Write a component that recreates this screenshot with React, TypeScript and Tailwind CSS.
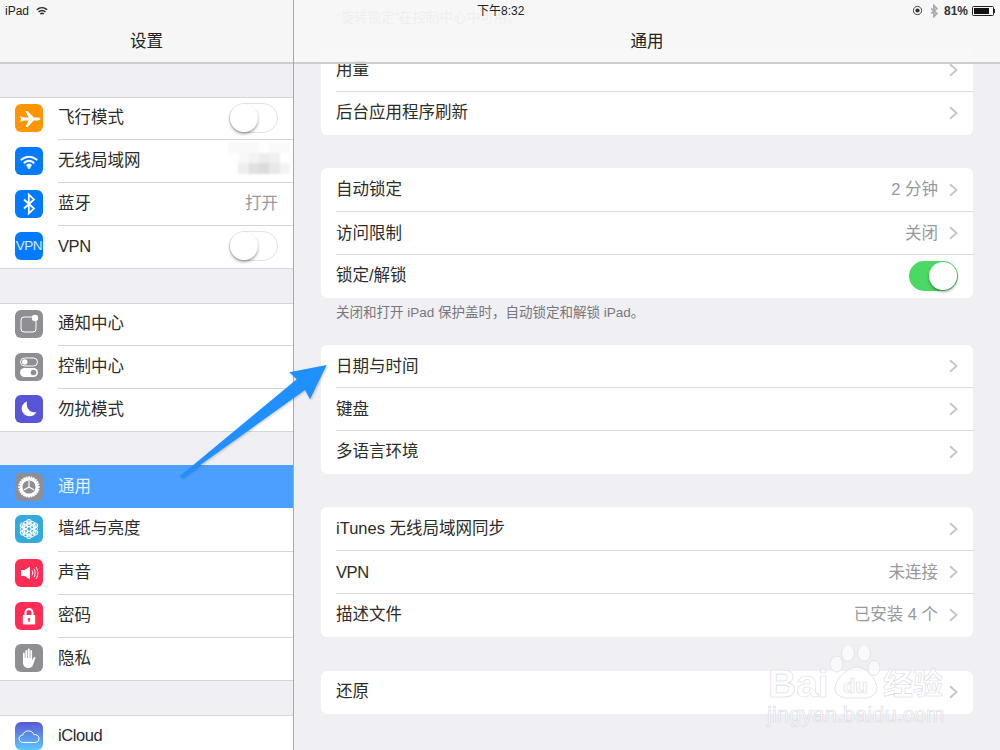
import React from "react";

const FONT = { fontFamily: '"Liberation Sans","Noto Sans CJK SC",sans-serif' };

function Plane() {
  return (
    <svg viewBox="0 0 28 28" className="w-[28px] h-[28px]">
      <path fill="#fff" d="M5 12.6l2 .1 2.4 0.7 4.2.1L10.400 7h2.200l6.300 6.500 4.100.1c1.300 0 2.400.6 2.400 1.400s-1.100 1.400-2.400 1.400l-4.100.1L12.600 23h-2.200l3.200-6.500-4.200.1-2.400.7-2 .1 1.100-2.400z" />
    </svg>
  );
}
function Wifi() {
  return (
    <svg viewBox="0 0 28 28" className="w-[28px] h-[28px]" fill="none" stroke="#fff" strokeWidth="2.200" strokeLinecap="round">
      <path d="M6.500 12.500c4.500-3.700 10.500-3.700 15 0" />
      <path d="M9.500 15.600c2.800-2.100 6.200-2.100 9 0" />
      <path d="M12.300 18.300c1-.7 2.400-.7 3.400 0" />
      <circle cx="14" cy="20.300" r=".6" fill="#fff" />
    </svg>
  );
}
function Bt({ color = "#fff", width = 1.8 }: { color?: string; width?: number }) {
  return (
    <svg viewBox="0 0 28 28" className="w-full h-full" fill="none" stroke={color} strokeWidth={width}>
      <path d="M9 9.500l10 9-5.200 5V4.500l5.200 5-10 9" />
    </svg>
  );
}
function Notif() {
  return (
    <svg viewBox="0 0 28 28" className="w-[28px] h-[28px]">
      <rect x="6" y="7" width="15" height="15" rx="3" fill="none" stroke="#fff" strokeWidth="1" />
      <circle cx="20" cy="8" r="3.200" fill="#fff" />
    </svg>
  );
}
function Control() {
  return (
    <svg viewBox="0 0 28 28" className="w-[28px] h-[28px]">
      <rect x="5.500" y="5" width="17" height="8" rx="4" fill="none" stroke="#fff" strokeWidth="1" />
      <circle cx="9.800" cy="9" r="2.700" fill="#fff" />
      <rect x="5" y="15" width="18" height="9" rx="4.500" fill="#fff" />
      <circle cx="18.500" cy="19.500" r="2.800" fill="#8e8e93" />
    </svg>
  );
}
function Moon() {
  return (
    <svg viewBox="0 0 28 28" className="w-[28px] h-[28px]">
      <path fill="#fff" d="M12 6.500c-.9 3.800.2 7.400 3 9.400 2 1.400 4.300 1.700 6.500 1-1.400 2.700-4 4.400-7 4.400-4.300 0-7.800-3.400-7.800-7.700 0-3.200 2.200-6 5.300-7.100z" />
    </svg>
  );
}
function Gear() {
  const teeth = Array.from({ length: 24 }, (_, i) => i * 15);
  return (
    <svg viewBox="0 0 28 28" className="w-[28px] h-[28px]">
      <circle cx="14" cy="14" r="8" fill="none" stroke="#fff" strokeWidth="2.800" />
      {teeth.map((a) => (
        <rect key={a} x="13.100" y="3.300" width="1.800" height="2.600" fill="#fff" transform={`rotate(${a} 14 14)`} />
      ))}
      <path d="M14 14V8M14 14l-5.200 3M14 14l5.200 3" stroke="#fff" strokeWidth="1.200" fill="none" />
    </svg>
  );
}
function Flower() {
  const a = [0, 60, 120, 180, 240, 300];
  return (
    <svg viewBox="0 0 28 28" className="w-[28px] h-[28px]" fill="none" stroke="#fff" strokeWidth=".9">
      <circle cx="14" cy="14" r="2.400" />
      {a.map((d) => (
        <g key={d} transform={`rotate(${d} 14 14)`}>
          <circle cx="14" cy="9.400" r="2.600" />
          <circle cx="14" cy="6.600" r="2.300" fill="#fff" fillOpacity=".35" />
        </g>
      ))}
      {a.map((d) => (
        <circle key={d} cx="14" cy="7.800" r="2.300" transform={`rotate(${d + 30} 14 14)`} />
      ))}
    </svg>
  );
}
function Speaker() {
  return (
    <svg viewBox="0 0 28 28" className="w-[28px] h-[28px]">
      <path fill="#fff" d="M6 11h3.500L15 7.500v13L9.500 17H6z" />
      <g fill="none" stroke="#fff" strokeWidth="1">
        <path d="M17 11.500c1 1.500 1 3.500 0 5" />
        <path d="M19 9.800c1.700 2.600 1.700 5.800 0 8.400" />
        <path d="M21 8c2.400 3.700 2.400 8.300 0 12" />
      </g>
    </svg>
  );
}
function Lock() {
  return (
    <svg viewBox="0 0 28 28" className="w-[28px] h-[28px]">
      <path fill="none" stroke="#fff" strokeWidth="2" d="M10.500 13v-2.500a3.500 3.500 0 0 1 7 0V13" />
      <path fill="#fff" fillRule="evenodd" d="M8.500 13h11a.7.7 0 0 1 .7.7v8a.7.7 0 0 1-.7.7h-11a.7.7 0 0 1-.7-.7v-8a.7.7 0 0 1 .7-.7zM14 16a1.300 1.300 0 0 0-.6 2.400V20h1.200v-1.600A1.300 1.300 0 0 0 14 16z" />
    </svg>
  );
}
function Hand() {
  return (
    <svg viewBox="0 0 28 28" className="w-[28px] h-[28px]">
      <path fill="#fff" d="M8 9.500c0-1.200 1.800-1.200 1.800 0V14h.6V6.800c0-1.200 1.800-1.200 1.800 0V14h.6V5.500c0-1.200 1.900-1.200 1.900 0V14h.6V7c0-1.200 1.800-1.200 1.800 0v9.300l1.400-2.600c.7-1.200 2.400-.5 1.800.8l-2.300 6.300C17.200 23 15.800 24 13.500 24 10 24 8 21.800 8 18.500z" />
    </svg>
  );
}
function Cloud() {
  return (
    <svg viewBox="0 0 28 28" className="w-[28px] h-[28px]">
      <path fill="none" stroke="#fff" strokeWidth="1" d="M8.500 20.500c-2.600 0-4.500-1.600-4.500-3.700 0-2 1.600-3.500 3.600-3.600.8-2.700 3-4.300 5.700-4.300 2.800 0 5 1.700 5.800 4 .5-.2.900-.2 1.400-.2 2 0 3.500 1.800 3.500 3.900 0 2.200-1.700 3.900-4 3.900z" />
    </svg>
  );
}
function VpnIcon() {
  return <span className="text-[13.500px] tracking-[-0.5px] text-white/85 leading-none">VPN</span>;
}

function Icon({ bg, children, shift = true }: { bg: string; children: React.ReactNode; shift?: boolean }) {
  return (
    <div className={`w-[28px] h-[28px] rounded-[6px] shrink-0 flex items-center justify-center ${shift ? "-mt-[2px]" : ""} ${bg}`}>
      {children}
    </div>
  );
}

function Toggle({ on = false, side = false }: { on?: boolean; side?: boolean }) {
  return (
    <div
      className={`w-[49px] h-[30px] rounded-full flex items-center ${
        on ? "bg-[#4cd864] justify-end pr-[1px]" : "bg-white border border-[#e3e3e5] justify-start"
      } ${side ? "mr-[15px]" : ""}`}
    >
      <div className="w-[28px] h-[28px] rounded-full bg-white shadow-[0_2px_3px_rgba(0,0,0,0.35)]" />
    </div>
  );
}

function SideRow({
  icon,
  label,
  right,
  h = "h-[43px]",
  selected = false,
  last = false,
}: {
  icon: React.ReactNode;
  label: string;
  right?: React.ReactNode;
  h?: string;
  selected?: boolean;
  last?: boolean;
}) {
  const latin = /^[A-Za-z]+$/.test(label);
  return (
    <div className={`${h} flex items-center pl-[15px] ${selected ? "bg-[#4a9fff]" : ""}`}>
      {icon}
      <div
        className={`flex-1 self-stretch flex items-center justify-between ml-[15px] ${
          selected ? "" : last ? "pb-[2px]" : "pb-[2px] border-b border-[#d5d5d8]"
        }`}
      >
        <span className={`text-[16.500px] ${latin ? "tracking-[-0.4px]" : ""} ${selected ? "text-white/85" : "text-[#2b2b2b]"}`}>{label}</span>
        {right}
      </div>
    </div>
  );
}

function Chevron() {
  return (
    <svg viewBox="0 0 9 14" className="w-[9px] h-[14px] ml-[11px]" fill="none" stroke="#c7c7cc" strokeWidth="2">
      <path d="M1 1.200L7.500 7 1 12.800" />
    </svg>
  );
}

function Row({
  label,
  value,
  control,
  last = false,
  h = "h-[43px]",
}: {
  label: string;
  value?: string;
  control?: React.ReactNode;
  last?: boolean;
  h?: string;
}) {
  const latin = /^[A-Za-z]+$/.test(label);
  return (
    <div className={`${h} ml-[15px] flex items-center justify-between pr-[15px] ${last ? "pb-[2px]" : "border-b border-[#d9d9dc]"}`}>
      <span className={`text-[16.500px] text-[#2b2b2b] ${latin ? "tracking-[-0.4px]" : ""}`}>{label}</span>
      {control ?? (
        <span className="flex items-center text-[16.500px] text-[#98989c]">
          {value}
          <Chevron />
        </span>
      )}
    </div>
  );
}

function Card({ children, className = "" }: { children: React.ReactNode; className?: string }) {
  return <div className={`bg-white rounded-[6px] mx-[27px] ${className}`}>{children}</div>;
}

function Blur() {
  const cells = [
    "bg-[#f9f9f9]", "bg-[#f9f9f9]", "bg-[#f9f9f9]", "bg-white", "bg-[#fafafa]", "bg-[#fafafa]",
    "bg-white", "bg-[#f8f8f8]", "bg-[#f3f3f3]", "bg-[#ececec]", "bg-[#f0f0f0]", "bg-white",
    "bg-white", "bg-[#eeeeee]", "bg-[#e0e0e0]", "bg-[#dcdcdc]", "bg-[#e8e8e8]", "bg-[#f4f4f4]",
  ];
  return (
    <div className="absolute left-[228px] top-[142px] w-[62px] h-[32px] grid grid-cols-6 grid-rows-3 blur-[1px]">
      {cells.map((c, i) => (
        <div key={i} className={c} />
      ))}
    </div>
  );
}

function Arrow() {
  return (
    <svg
      className="absolute left-[170px] top-[355px] pointer-events-none drop-shadow-[1px_1px_1px_rgba(0,0,0,0.2)]"
      width="170"
      height="130"
      viewBox="170 355 170 130"
    >
      <path fill="#1e90ff" d="M180 476L296.700 379.300 289.300 372.300 326.700 365 310 399.300 305 390 182 478z" />
    </svg>
  );
}

function Watermark() {
  const stroke = "[-webkit-text-stroke:0.6px_#dadadf]";
  return (
    <div className="absolute left-[766px] top-[645px] w-[210px] h-[90px] pointer-events-none">
      <svg viewBox="830 645 50 55" className="absolute left-[64px] top-0 w-[50px] h-[55px]">
        <g fill="#fff" fillOpacity=".6" stroke="#dadadf" strokeWidth=".7">
          <ellipse cx="836.500" cy="664" rx="6.500" ry="8" />
          <ellipse cx="848" cy="653" rx="6.500" ry="8.500" />
          <ellipse cx="864" cy="653" rx="6.500" ry="8.500" />
          <ellipse cx="874" cy="668" rx="6" ry="7.500" />
          <path d="M857 667C866 667 877 680 877 688C877 695 870 698 865 698H848C841 698 835 695 835 688C835 680 847 667 857 667z" />
        </g>
      </svg>
      <span className={`absolute left-[2px] top-[19px] text-[39px] font-bold leading-none text-white/60 ${stroke}`}>Bai</span>
      <span className={`absolute left-[77px] top-[31px] text-[20px] font-bold leading-none text-white/60 ${stroke}`}>du</span>
      <span className={`absolute left-[117px] top-[24px] text-[30px] font-bold leading-none text-white/60 ${stroke}`}>经验</span>
      <span className={`absolute left-[1px] top-[59px] text-[22px] leading-none text-white/60 ${stroke}`}>jingyan.baidu.com</span>
    </div>
  );
}

export default function App() {
  return (
    <div className="relative w-[1000px] h-[750px] overflow-hidden bg-[#efeff4] flex" style={FONT}>
      {/* Sidebar */}
      <aside className="w-[294px] h-full shrink-0 border-r border-[#a9a9ad] flex flex-col">
        <header className="h-[64px] shrink-0 bg-[#f6f6f6] border-b-2 border-[#cdcdd0] flex items-end justify-center pb-[8px]">
          <span className="text-[16.500px] text-[#222]">设置</span>
        </header>
        <div className="mt-[33px] bg-white border-y border-[#d5d5d8]">
          <SideRow h="h-[42px]" icon={<Icon bg="bg-[#ff9500]"><Plane /></Icon>} label="飞行模式" right={<Toggle side />} />
          <SideRow icon={<Icon bg="bg-[#007aff]"><Wifi /></Icon>} label="无线局域网" />
          <SideRow icon={<Icon bg="bg-[#007aff]"><Bt /></Icon>} label="蓝牙" right={<span className="text-[16.500px] text-[#98989c] mr-[15px]">打开</span>} />
          <SideRow h="h-[42px]" icon={<Icon bg="bg-[#007aff]"><VpnIcon /></Icon>} label="VPN" right={<Toggle side />} last />
        </div>
        <div className="mt-[34px] bg-white border-y border-[#d5d5d8]">
          <SideRow h="h-[42px]" icon={<Icon bg="bg-[#8e8e93]"><Notif /></Icon>} label="通知中心" />
          <SideRow icon={<Icon bg="bg-[#8e8e93]"><Control /></Icon>} label="控制中心" />
          <SideRow h="h-[42px]" icon={<Icon bg="bg-[#5856d6]"><Moon /></Icon>} label="勿扰模式" last />
        </div>
        <div className="mt-[33px] bg-white border-b border-[#d5d5d8]">
          <SideRow icon={<Icon shift={false} bg="bg-[#8e8e93]"><Gear /></Icon>} label="通用" selected />
          <SideRow h="h-[44px]" icon={<Icon bg="bg-[#34aadc]"><Flower /></Icon>} label="墙纸与亮度" />
          <SideRow icon={<Icon bg="bg-[#ff2d55]"><Speaker /></Icon>} label="声音" />
          <SideRow icon={<Icon bg="bg-[#ff2d55]"><Lock /></Icon>} label="密码" />
          <SideRow h="h-[42px]" icon={<Icon bg="bg-[#8e8e93]"><Hand /></Icon>} label="隐私" last />
        </div>
        <div className="mt-[34px] bg-white border-t border-[#d5d5d8] flex-1">
          <SideRow
            h="h-[41px]"
            icon={<Icon bg="bg-gradient-to-b from-[#5856d6] to-[#5ac8fa]"><Cloud /></Icon>}
            label="iCloud"
            last
          />
        </div>
      </aside>

      {/* Detail */}
      <main className="relative flex-1 h-full flex flex-col">
        <p className="ml-[42px] mt-[10px] mb-[23px] h-[15px] text-[13.500px] leading-[15px] text-[#99999e]">
          “旋转锁定”在控制中心中可用。
        </p>
        <Card>
          <Row label="用量" h="h-[44px]" />
          <Row label="后台应用程序刷新" last />
        </Card>
        <Card className="mt-[33px]">
          <Row label="自动锁定" value="2 分钟" h="h-[44px]" />
          <Row label="访问限制" value="关闭" />
          <Row label="锁定/解锁" control={<Toggle on />} last />
        </Card>
        <p className="mx-[42px] mt-[7px] mb-[25px] h-[15px] text-[13.500px] leading-[15px] text-[#77777c]">
          关闭和打开 iPad 保护盖时，自动锁定和解锁 iPad。
        </p>
        <Card>
          <Row label="日期与时间" />
          <Row label="键盘" />
          <Row label="多语言环境" last />
        </Card>
        <Card className="mt-[33px]">
          <Row label="iTunes 无线局域网同步" h="h-[44px]" />
          <Row label="VPN" value="未连接" />
          <Row label="描述文件" value="已安装 4 个" last />
        </Card>
        <Card className="mt-[34px]">
          <Row label="还原" last />
        </Card>
        <header className="absolute inset-x-0 top-0 h-[64px] bg-[#f7f7f7]/90 border-b-2 border-[#cdcdd0] flex items-end justify-center pb-[8px]">
          <span className="text-[16.500px] text-[#222]">通用</span>
        </header>
      </main>

      {/* Status bar */}
      <div className="absolute inset-x-0 top-0 h-[21px] flex items-center justify-between px-[5px] text-[12px] text-[#222]">
        <div className="flex items-center gap-[7px]">
          <span>iPad</span>
          <svg viewBox="0 0 14 11" className="w-[12px] h-[10px]" fill="none" stroke="#222" strokeWidth="1.800">
            <path d="M1 4c3.500-3 8.500-3 12 0M3 6.500c2.500-2 5.500-2 8 0M5 8.800c1.200-.8 2.800-.8 4 0" />
          </svg>
        </div>
        <span className="absolute left-[477px]">下午8:32</span>
        <div className="flex items-center">
          <svg viewBox="0 0 12 12" className="w-[11px] h-[11px]">
            <circle cx="6" cy="6" r="4.500" fill="none" stroke="#333" strokeWidth="1" />
            <circle cx="6" cy="6" r="2.300" fill="#333" />
          </svg>
          <span className="ml-[3px] w-[16px] h-[16px] flex items-center justify-center"><Bt color="#aaa" width={3} /></span>
          <span className="ml-[2px] font-bold text-[12px] text-[#333]">81%</span>
          <div className="ml-[4px] w-[22px] h-[10px] border border-[#222] rounded-[1.500px] p-[1px]">
            <div className="h-full w-[81%] bg-[#111]" />
          </div>
          <div className="w-[1px] h-[4px] bg-[#222]" />
        </div>
      </div>

      <Blur />
      <Arrow />
      <Watermark />
    </div>
  );
}
